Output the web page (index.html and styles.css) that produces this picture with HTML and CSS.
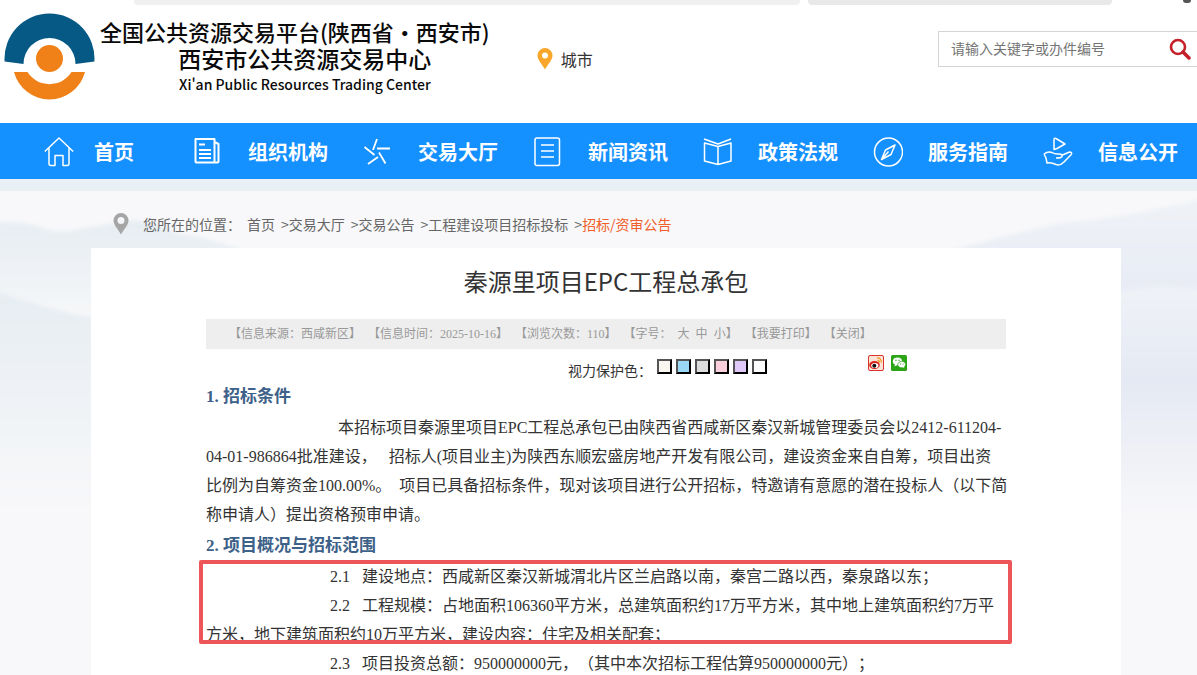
FILE: index.html
```html
<!DOCTYPE html>
<html lang="zh-CN">
<head>
	<meta charset="utf-8">
	<title>秦源里项目EPC工程总承包</title>
	<link rel="stylesheet" href="styles.css">
</head>
<body>
	<div class="top-tabs">
		<span class="tab tab-wide"></span>
		<span class="tab tab-dark"></span>
		<span class="dot"></span>
	</div>
	<header class="header">
		<svg class="logo" viewBox="0 0 92 88" width="92" height="88">
			<path d="M.6 48.500A45 45 0 1 1 90.400 48.500L71.500 51A26 26 0 1 0 19.500 51Z" fill="#075985"/>
			<path d="M10 59H23.500A26 26 0 0 0 67.500 59H81A36.700 36.700 0 0 1 10 59Z" fill="#f08018"/>
			<circle cx="45.500" cy="45.500" r="13.500" fill="#f08018"/>
		</svg>
		<div class="brand">
			<div class="brand-platform">全国公共资源交易平台(陕西省·西安市)</div>
			<div class="brand-center">西安市公共资源交易中心</div>
			<div class="brand-en">Xi'an Public Resources Trading Center</div>
		</div>
		<a class="city" href="#">
			<svg viewBox="0 0 16 22" width="16" height="22"><path fill="#f9a72b" fill-rule="evenodd" d="M8 0a7.500 7.500 0 0 1 7.500 7.500C15.500 12 11 16 8 21.500 5 16 .5 12 .5 7.500A7.500 7.500 0 0 1 8 0zm0 4.500a3 3 0 1 0 0 6 3 3 0 0 0 0-6z"/></svg>
			城市
		</a>
		<form class="search">
			<input type="text" aria-label="搜索" placeholder="请输入关键字或办件编号">
			<button type="button" aria-label="搜索">
				<svg viewBox="0 0 22 22" width="22" height="22" fill="none" stroke="#c4202a"><circle cx="9" cy="9" r="7" stroke-width="2.600"/><path d="M14 14l6 6" stroke-width="3.500" stroke-linecap="round"/></svg>
			</button>
		</form>
	</header>

	<nav class="nav">
		<a href="#">
			<svg viewBox="0 0 30 30"><path d="M.8 14.500L15 1l14.200 13.500M5 11v15.500a2 2 0 0 0 2 2h4V18.500h8v10h4a2 2 0 0 0 2-2V11"/></svg>
			首页
		</a>
		<a href="#">
			<svg viewBox="0 0 30 30"><path stroke-width="2" d="M2.500 2h19v23.500h-18a1 1 0 0 1-1-1zM21.500 5l4 2v17.500q0 1-2 1h-2"/><path stroke-width="2" d="M6 7.500h6M6 13h12M6 17h12M6 21h12"/></svg>
			组织机构
		</a>
		<a href="#">
			<svg viewBox="0 0 30 30"><path stroke-width="1.800" d="M14 2L10 13M14 11.500h13M1.500 10l10 8M16 15.500l6.500 11M15 20L5 27"/></svg>
			交易大厅
		</a>
		<a href="#">
			<svg viewBox="0 0 30 30"><rect x="2" y="1" width="24.500" height="27.500" rx="2"/><path d="M8 8h13M8 14h13M8 20h13"/></svg>
			新闻资讯
		</a>
		<a href="#">
			<svg viewBox="0 0 30 30"><path d="M1 2l14 5 13-5M1.500 6v18L15 27.500 28 24V6L15 9.500zM15 9.500v18"/></svg>
			政策法规
		</a>
		<a href="#">
			<svg viewBox="0 0 30 30"><circle cx="15.500" cy="15" r="14"/><path d="M22 8l-9.500 5-4 9.500 9.500-5zM8.500 22.500l7-8"/></svg>
			服务指南
		</a>
		<a href="#">
			<svg viewBox="0 0 30 30"><path d="M11 2.500v10l3-1 8-4.500L13 1.500q-2-.8-2 1z"/><path d="M1 17q4-3 8-1.500 3 2 7 1.500 4 0 3 2.500-1 1.500-6 1.500M19.500 18l7-3q3 0 1.800 2.500L21 25q-4 4-8 2.500-5-2.500-9-1.500l-1-5-2-4"/></svg>
			信息公开
		</a>
	</nav>

	<div class="page">
		<svg class="hills" viewBox="0 0 1197 484" preserveAspectRatio="none" aria-hidden="true">
			<defs>
				<linearGradient id="haze-left" x1="0" y1="0" x2="0" y2="1">
					<stop offset="0" stop-color="#e6edf2"/>
					<stop offset="1" stop-color="#f8f8fa"/>
				</linearGradient>
				<linearGradient id="haze-right" x1="0" y1="0" x2="0" y2="1">
					<stop offset="0" stop-color="#eff2f7"/>
					<stop offset=".4" stop-color="#e5e9f3"/>
					<stop offset="1" stop-color="#f8f8fa"/>
				</linearGradient>
				<filter id="soft"><feGaussianBlur stdDeviation="2"/></filter>
			</defs>
			<g filter="url(#soft)">
				<path fill="url(#haze-left)" d="M-10 32Q25 30 42 37T80 38Q110 33 130 30T175 42Q220 48 270 70V140H-10Z"/>
				<path fill="url(#haze-left)" d="M-10 98Q30 112 60 120T110 128V320H-10Z"/>
				<path fill="url(#haze-right)" d="M930 66Q990 48 1060 32Q1120 28 1210 6V330H900Z"/>
				<path fill="url(#haze-right)" d="M1110 104Q1150 90 1210 100V330H1110Z"/>
			</g>
		</svg>
		<div class="crumbs">
			<svg viewBox="0 0 16 22" width="16" height="22"><path fill="#a5a5a5" fill-rule="evenodd" d="M8 0a7.500 7.500 0 0 1 7.500 7.500C15.500 12 11 16 8 21.500 5 16 .5 12 .5 7.500A7.500 7.500 0 0 1 8 0zm0 4a3.500 3.500 0 1 0 0 7 3.500 3.500 0 0 0 0-7z"/></svg>
			<span class="crumbs-label">您所在的位置：</span>
			<a href="#">首页</a>
			<a href="#">&gt;交易大厅</a>
			<a href="#">&gt;交易公告</a>
			<a href="#">&gt;工程建设项目招标投标</a>
			<span>&gt;<a class="current" href="#">招标/资审公告</a></span>
		</div>

		<main class="article">
			<h1>秦源里项目EPC工程总承包</h1>
			<div class="meta">
				<span>【信息来源：西咸新区】</span>
				<span>【信息时间：2025-10-16】</span>
				<span>【浏览次数：110】</span>
				<span class="sizes">【字号： <a href="#">大</a><a href="#">中</a><a href="#">小</a>】</span>
				<span>【<a href="#">我要打印</a>】</span>
				<span>【<a href="#">关闭</a>】</span>
			</div>
			<div class="tools">
				<span>视力保护色：</span>
				<div class="swatches">
					<button type="button" class="swatch cream" aria-label="米色"></button>
					<button type="button" class="swatch blue" aria-label="蓝色"></button>
					<button type="button" class="swatch grey" aria-label="灰色"></button>
					<button type="button" class="swatch pink" aria-label="粉色"></button>
					<button type="button" class="swatch purple" aria-label="紫色"></button>
					<button type="button" class="swatch white" aria-label="白色"></button>
				</div>
				<div class="share">
					<a href="#" aria-label="微博">
						<svg viewBox="0 0 16 16" width="16" height="16"><rect x=".5" y=".5" width="15" height="15" rx="1.500" fill="#fbe3d8" stroke="#d9342b"/><ellipse cx="6.500" cy="10" rx="5.300" ry="4" fill="#d92018"/><ellipse cx="6.800" cy="10.500" rx="3.600" ry="2.600" fill="#fff"/><circle cx="6.300" cy="10.800" r="2" fill="#111"/><path d="M9 3q4-.5 4.500 4.500M9.500 5.500q2 0 2 2" fill="none" stroke="#f39a1e" stroke-width="1.300"/></svg>
					</a>
					<a href="#" aria-label="微信">
						<svg viewBox="0 0 16 16" width="16" height="16"><rect width="16" height="16" rx="1.500" fill="#2ba515"/><path fill="#fff" d="M6.500 2.500c3 0 4.800 1.800 4.800 3.900S9.500 10 6.500 10l-3 1.500.5-2C2.500 8.800 1.800 7.700 1.800 6.400c0-2.200 1.900-3.900 4.700-3.900z"/><path fill="#fff" stroke="#2ba515" stroke-width=".7" d="M10.700 6.300c2.200 0 3.900 1.500 3.900 3.300 0 1.100-.6 1.900-1.400 2.500l.3 1.500-1.700-.8c-3 .4-5-1.200-5-3.200 0-1.800 1.700-3.300 3.900-3.300z"/><g fill="#2ba515"><circle cx="5" cy="5.300" r=".7"/><circle cx="8" cy="5.300" r=".7"/><circle cx="9.500" cy="9" r=".6"/><circle cx="12" cy="9" r=".6"/></g></svg>
					</a>
				</div>
			</div>

			<h2>1.&nbsp;招标条件</h2>
			<p class="lead">本招标项目秦源里项目EPC工程总承包已由陕西省西咸新区秦汉新城管理委员会以2412-611204-<br>
			04-01-986864批准建设，&nbsp;&nbsp;&nbsp;招标人(项目业主)为陕西东顺宏盛房地产开发有限公司，建设资金来自自筹，项目出资<br>
			比例为自筹资金100.00%。&nbsp;&nbsp;项目已具备招标条件，现对该项目进行公开招标，特邀请有意愿的潜在投标人（以下简<br>
			称申请人）提出资格预审申请。</p>
			<h2>2.&nbsp;项目概况与招标范围</h2>
			<div class="marked">
				<p>2.1&nbsp;&nbsp;&nbsp;建设地点：西咸新区秦汉新城渭北片区兰启路以南，秦宫二路以西，秦泉路以东；</p>
				<p>2.2&nbsp;&nbsp;&nbsp;工程规模：占地面积106360平方米，总建筑面积约17万平方米，其中地上建筑面积约7万平<br>
				方米，地下建筑面积约10万平方米，建设内容：住宅及相关配套；</p>
			</div>
			<p>2.3&nbsp;&nbsp;&nbsp;项目投资总额：950000000元，（其中本次招标工程估算950000000元）；</p>
		</main>
	</div>
</body>
</html>
```
FILE: styles.css
```css
* {
	box-sizing: border-box;
}
body {
	margin: 0;
	background: #fff;
	color: #333;
	font-family: "Noto Sans CJK SC", sans-serif;
	font-size: 14px;
	text-spacing-trim: space-all;
	overflow: hidden;
}
a {
	color: inherit;
	text-decoration: none;
}
svg {
	display: block;
	flex: none;
}

.top-tabs {
	display: flex;
	gap: 8px;
	height: 5px;
	padding: 0 6px 0 134px;
}
.tab {
	flex: 304;
	border-radius: 0 0 4px 4px;
	background: #f0f0f0;
}
.tab-wide {
	flex: 666;
}
.tab-dark {
	background: #e9e9e9;
}
.dot {
	width: 8px;
	height: 3px;
	margin-left: 63px;
	border-radius: 0 0 4px 4px;
	background: #555;
}

.header {
	display: flex;
	align-items: flex-start;
	height: 118px;
	padding-left: 4px;
}
.logo {
	margin-top: 8px;
}
.brand {
	padding: 13px 0 0 4px;
	color: #0a0a0a;
	font-size: 22px;
	font-weight: 500;
	line-height: 27px;
	white-space: nowrap;
}
.brand-center,
.brand-en {
	padding-left: 20px;
	text-align: center;
}
.brand-center {
	font-size: 23px;
}
.brand-en {
	font-size: 14px;
	line-height: 24px;
}
.city {
	display: flex;
	align-items: center;
	gap: 8px;
	margin: 42px 0 0 47px;
	font-size: 16px;
	line-height: 24px;
}
.search {
	display: flex;
	align-items: center;
	width: 259px;
	height: 36px;
	margin: 26px 0 0 auto;
	border: 1px solid #d5d5d5;
	border-right: none;
}
.search input {
	flex: 1;
	min-width: 0;
	padding: 0 12px 2px;
	border: none;
	outline: none;
	background: none;
	font-family: inherit;
	font-size: 14px;
}
.search input::placeholder {
	color: #757575;
}
.search button {
	padding: 0 6px 0 0;
	border: none;
	background: none;
}

.nav {
	display: grid;
	grid-template-columns: 149px repeat(6, 170px);
	height: 56px;
	padding-left: 44px;
	background: #1590ff;
	color: #fff;
	font-size: 20px;
	font-weight: bold;
}
.nav a {
	display: flex;
	align-items: center;
	gap: 25px;
	white-space: nowrap;
}
.nav a:first-child {
	gap: 20px;
}
.nav svg {
	width: 30px;
	height: 30px;
	margin-top: 2px;
	fill: none;
	stroke: #fff;
	stroke-width: 1.5;
	stroke-linejoin: round;
}

.page {
	position: relative;
	border-top: 12px solid #e8f0f5;
	background: #f8f8fa;
}
.hills {
	position: absolute;
	top: 0;
	left: 0;
	width: 100%;
	height: 484px;
}
.crumbs {
	position: relative;
	display: flex;
	align-items: center;
	gap: 6px;
	height: 57px;
	padding: 8px 0 0 113px;
	color: #666;
	white-space: nowrap;
}
.crumbs-label {
	margin-left: 8px;
}
.crumbs .current {
	color: #f0602b;
}

.article {
	position: relative;
	margin: 0 76px 0 91px;
	padding: 15px 115px 0;
	background: #fff;
}
h1 {
	margin: 0;
	color: #333;
	font-size: 24px;
	font-weight: normal;
	line-height: 36px;
	text-align: center;
}
.meta {
	display: flex;
	gap: 7px;
	margin-top: 20px;
	padding-left: 23px;
	background: #eee;
	color: #999;
	font-family: "Liberation Serif", "Noto Sans CJK SC", serif;
	font-size: 12px;
	line-height: 30px;
	white-space: nowrap;
}
.sizes a {
	margin-right: 6px;
}
.sizes a:first-of-type {
	margin-left: 3px;
}
.sizes a:last-of-type {
	margin-right: 0;
}
.tools {
	display: flex;
	align-items: flex-start;
	height: 31px;
	padding: 6px 99px 0 0;
}
.tools > span {
	margin-left: auto;
	padding-top: 5px;
	line-height: 20px;
}
.swatches {
	display: flex;
	gap: 4px;
	padding: 4px 0 0 5px;
}
.swatch {
	width: 15px;
	height: 15px;
	padding: 0;
	border: 2px outset #000;
}
.cream { background: #faf6f0; }
.blue { background: #99d9f5; }
.grey { background: #dcdcdc; }
.pink { background: #fbd0dc; }
.purple { background: #e0c8fb; }
.white { background: #fff; }
.share {
	display: flex;
	gap: 7px;
	margin-left: 101px;
}

h2 {
	margin: 0;
	color: #3d6188;
	font-family: "Liberation Serif", "Noto Sans CJK SC", serif;
	font-size: 17px;
	line-height: 33px;
}
p {
	margin: 0;
	font-family: "Liberation Serif", "Noto Sans CJK SC", serif;
	font-size: 16px;
	line-height: 29px;
	text-indent: 124px;
	white-space: nowrap;
}
.lead {
	text-indent: 132px;
}
.marked {
	position: relative;
}
/* red frame over the marked clauses */
.marked::after {
	content: "";
	position: absolute;
	inset: -2px -6px 5px -7px;
	border: 4px solid #ee5558;
	border-radius: 2px;
}
```
